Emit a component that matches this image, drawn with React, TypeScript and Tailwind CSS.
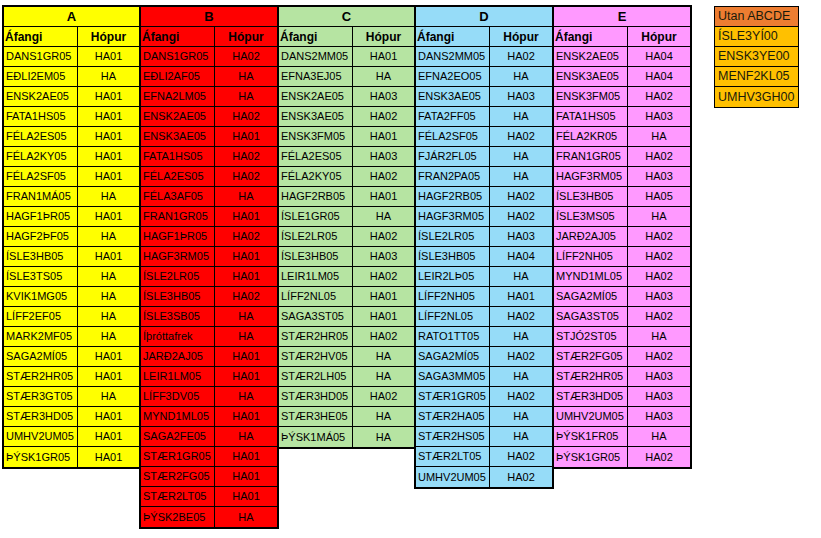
import React from "react";

// Course groups A–E, each a two-column block (Áfangi / Hópur)
type Row = [string, string];

const A: Row[] = [
  ["DANS1GR05", "HA01"],
  ["EÐLI2EM05", "HA"],
  ["ENSK2AE05", "HA01"],
  ["FATA1HS05", "HA01"],
  ["FÉLA2ES05", "HA01"],
  ["FÉLA2KY05", "HA01"],
  ["FÉLA2SF05", "HA01"],
  ["FRAN1MÁ05", "HA"],
  ["HAGF1ÞR05", "HA01"],
  ["HAGF2ÞF05", "HA"],
  ["ÍSLE3HB05", "HA01"],
  ["ÍSLE3TS05", "HA"],
  ["KVIK1MG05", "HA"],
  ["LÍFF2EF05", "HA"],
  ["MARK2MF05", "HA"],
  ["SAGA2MÍ05", "HA01"],
  ["STÆR2HR05", "HA01"],
  ["STÆR3GT05", "HA"],
  ["STÆR3HD05", "HA01"],
  ["UMHV2UM05", "HA01"],
  ["ÞÝSK1GR05", "HA01"],
];

const B: Row[] = [
  ["DANS1GR05", "HA02"],
  ["EÐLI2AF05", "HA"],
  ["EFNA2LM05", "HA"],
  ["ENSK2AE05", "HA02"],
  ["ENSK3AE05", "HA01"],
  ["FATA1HS05", "HA02"],
  ["FÉLA2ES05", "HA02"],
  ["FÉLA3AF05", "HA"],
  ["FRAN1GR05", "HA01"],
  ["HAGF1ÞR05", "HA02"],
  ["HAGF3RM05", "HA01"],
  ["ÍSLE2LR05", "HA01"],
  ["ÍSLE3HB05", "HA02"],
  ["ÍSLE3SB05", "HA"],
  ["Íþróttafrek", "HA"],
  ["JARÐ2AJ05", "HA01"],
  ["LEIR1LM05", "HA01"],
  ["LÍFF3DV05", "HA"],
  ["MYND1ML05", "HA01"],
  ["SAGA2FE05", "HA"],
  ["STÆR1GR05", "HA01"],
  ["STÆR2FG05", "HA01"],
  ["STÆR2LT05", "HA01"],
  ["ÞÝSK2BE05", "HA"],
];

const C: Row[] = [
  ["DANS2MM05", "HA01"],
  ["EFNA3EJ05", "HA"],
  ["ENSK2AE05", "HA03"],
  ["ENSK3AE05", "HA02"],
  ["ENSK3FM05", "HA01"],
  ["FÉLA2ES05", "HA03"],
  ["FÉLA2KY05", "HA02"],
  ["HAGF2RB05", "HA01"],
  ["ÍSLE1GR05", "HA"],
  ["ÍSLE2LR05", "HA02"],
  ["ÍSLE3HB05", "HA03"],
  ["LEIR1LM05", "HA02"],
  ["LÍFF2NL05", "HA01"],
  ["SAGA3ST05", "HA01"],
  ["STÆR2HR05", "HA02"],
  ["STÆR2HV05", "HA"],
  ["STÆR2LH05", "HA"],
  ["STÆR3HD05", "HA02"],
  ["STÆR3HE05", "HA"],
  ["ÞÝSK1MÁ05", "HA"],
];

const D: Row[] = [
  ["DANS2MM05", "HA02"],
  ["EFNA2EO05", "HA"],
  ["ENSK3AE05", "HA03"],
  ["FATA2FF05", "HA"],
  ["FÉLA2SF05", "HA02"],
  ["FJÁR2FL05", "HA"],
  ["FRAN2PA05", "HA"],
  ["HAGF2RB05", "HA02"],
  ["HAGF3RM05", "HA02"],
  ["ÍSLE2LR05", "HA03"],
  ["ÍSLE3HB05", "HA04"],
  ["LEIR2LÞ05", "HA"],
  ["LÍFF2NH05", "HA01"],
  ["LÍFF2NL05", "HA02"],
  ["RATO1TT05", "HA"],
  ["SAGA2MÍ05", "HA02"],
  ["SAGA3MM05", "HA"],
  ["STÆR1GR05", "HA02"],
  ["STÆR2HA05", "HA"],
  ["STÆR2HS05", "HA"],
  ["STÆR2LT05", "HA02"],
  ["UMHV2UM05", "HA02"],
];

const E: Row[] = [
  ["ENSK2AE05", "HA04"],
  ["ENSK3AE05", "HA04"],
  ["ENSK3FM05", "HA02"],
  ["FATA1HS05", "HA03"],
  ["FÉLA2KR05", "HA"],
  ["FRAN1GR05", "HA02"],
  ["HAGF3RM05", "HA03"],
  ["ÍSLE3HB05", "HA05"],
  ["ÍSLE3MS05", "HA"],
  ["JARÐ2AJ05", "HA02"],
  ["LÍFF2NH05", "HA02"],
  ["MYND1ML05", "HA02"],
  ["SAGA2MÍ05", "HA03"],
  ["SAGA3ST05", "HA02"],
  ["STJÓ2ST05", "HA"],
  ["STÆR2FG05", "HA02"],
  ["STÆR2HR05", "HA03"],
  ["STÆR3HD05", "HA03"],
  ["UMHV2UM05", "HA03"],
  ["ÞÝSK1FR05", "HA"],
  ["ÞÝSK1GR05", "HA02"],
];

const GROUPS = [
  { title: "A", rows: A, cls: "w-[139px] bg-[#ffff00]", hopurTop: false },
  { title: "B", rows: B, cls: "-ml-[2px] w-[140px] bg-[#ff0000]", hopurTop: false },
  { title: "C", rows: C, cls: "-ml-[2px] w-[139px] bg-[#b6e4a2]", hopurTop: true },
  { title: "D", rows: D, cls: "-ml-[2px] w-[140px] bg-[#96dcf8]", hopurTop: false },
  { title: "E", rows: E, cls: "-ml-[2px] w-[140px] bg-[#ff99ff]", hopurTop: false },
];

const EXTRA = ["ÍSLE3YÍ00", "ENSK3YE00", "MENF2KL05", "UMHV3GH00"];

function Group({
  title,
  rows,
  cls,
  hopurTop,
}: {
  title: string;
  rows: Row[];
  cls: string;
  hopurTop: boolean;
}) {
  return (
    <div className={`flex flex-col border-2 border-black ${cls}`}>
      <div className="flex h-5 items-center justify-center border-b border-black text-[13px] font-bold">
        {title}
      </div>
      <div className="flex h-5 border-b border-black text-[12px] font-bold">
        <div className="flex w-[74px] items-center border-r border-black pl-[1px]">
          Áfangi
        </div>
        <div
          className={
            hopurTop
              ? "flex flex-1 items-start justify-center pt-[1px]"
              : "flex flex-1 items-center justify-center"
          }
        >
          Hópur
        </div>
      </div>
      {rows.map(([afangi, hopur], i) => (
        <div
          key={i}
          className="flex h-5 border-b border-black last:border-b-0"
        >
          <div className="flex w-[74px] items-center border-r border-black pl-[2px]">
            {afangi}
          </div>
          <div className="flex flex-1 items-center justify-center">{hopur}</div>
        </div>
      ))}
    </div>
  );
}

export default function App() {
  return (
    <div className="flex min-h-screen items-start bg-white pl-[2px] pt-[5px] font-['Liberation_Sans',Arial,sans-serif] text-[11px] text-black">
      {GROUPS.map((g) => (
        <Group key={g.title} {...g} />
      ))}

      {/* ── Courses outside the groups ─────────────────────────────── */}
      <div className="ml-[22px] mt-[1px] flex w-[85px] flex-col border border-black text-[12.5px] text-[#1a1a0a]">
        <div className="flex h-5 items-center border-b border-black bg-[#ed7d31] pl-[3px]">
          Utan ABCDE
        </div>
        {EXTRA.map((c) => (
          <div
            key={c}
            className="flex h-5 items-center border-b border-black bg-[#ffc000] pl-[3px] last:border-b-0"
          >
            {c}
          </div>
        ))}
      </div>
    </div>
  );
}
